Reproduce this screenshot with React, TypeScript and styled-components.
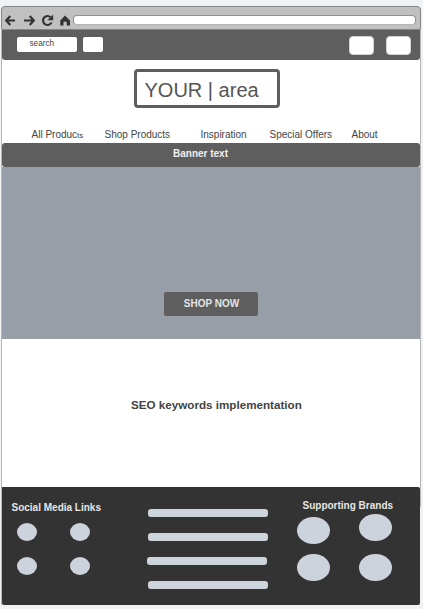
import React from "react";
import styled, { createGlobalStyle } from "styled-components";

const GlobalStyle = createGlobalStyle`
  * { box-sizing: border-box; }
  body {
    margin: 0;
    background: #f2f3f4;
    font-family: "Liberation Sans", Arial, sans-serif;
    color: #444;
    overflow: hidden;
  }
`;

const Page = styled.div`
  width: 423px;
  height: 609px;
  padding: 6px 2px 4px 1px;
  background: linear-gradient(#f0f3f5 0 30px, #f2f2f2 30px);
`;

const Window = styled.main`
  width: 420px;
  height: 599px;
  display: flex;
  flex-direction: column;
  border-radius: 5px 5px 0 0;
  background:
    linear-gradient(#b4b7b9, #b4b7b9) left / 1px 100% no-repeat,
    linear-gradient(#b4b7b9, #b4b7b9) right top / 1px 501px no-repeat,
    linear-gradient(#fff, #fff) left top / 100% 501px no-repeat;
`;

const BrowserBar = styled.header`
  height: 24px;
  flex: none;
  display: flex;
  align-items: flex-start;
  padding: 8px 4px 0 3px;
  background: #c0c0c0;
  border: 1px solid #858585;
  border-radius: 4px 4px 2px 2px;
`;

const BrowserIcons = styled.svg`
  width: 68px;
  height: 12px;
  flex: none;
  overflow: visible;
`;

const AddressBar = styled.div`
  width: 343px;
  height: 10px;
  background: #fff;
  border: 1px solid #929292;
  border-bottom-color: #b4b4b4;
  border-radius: 4px;
`;

const Toolbar = styled.div`
  height: 30px;
  flex: none;
  display: flex;
  align-items: flex-start;
  margin: 0 1px;
  padding: 7px 9px 0 15px;
  background: #5e5e5e;
  border-radius: 0 0 3px 3px;
`;

const SearchBox = styled.div`
  width: 60px;
  height: 15px;
  padding-left: 12.5px;
  font-size: 8.2px;
  line-height: 13px;
  background: #fff;
  border-radius: 2px;
`;

const SearchButton = styled.div`
  width: 20px;
  height: 15px;
  margin-left: 6px;
  background: #fff;
  border-radius: 2px;
`;

const Actions = styled.div`
  display: flex;
  gap: 12px;
  margin: -1px 0 0 auto;
`;

const Action = styled.div`
  width: 25px;
  height: 19px;
  background: #fff;
  border: 1px solid #d4d4d4;
  border-radius: 4px;
`;

const Logo = styled.div`
  width: 146px;
  height: 39px;
  flex: none;
  margin: 9px 0 0 133px;
  padding-left: 7.5px;
  font-size: 20px;
  line-height: 37px;
  color: #555;
  border: 3px solid #5e5e5e;
  border-radius: 4px;
  white-space: pre;
`;

const Nav = styled.nav`
  height: 35px;
  flex: none;
  display: flex;
  padding: 21px 0 0 30.5px;
`;

const NavItem = styled.span<{ $width: number }>`
  width: ${(p) => p.$width}px;
  font-size: 10px;
  line-height: 12px;
  white-space: nowrap;
`;

const SmallLetters = styled.span`
  font-size: 8px;
`;

const Banner = styled.div`
  height: 24px;
  flex: none;
  margin: 0 1px;
  padding-left: 171px;
  font-size: 10px;
  font-weight: bold;
  line-height: 22px;
  color: #f0f0f0;
  background: #5e5e5e;
  border-radius: 3px;
`;

const Hero = styled.section`
  height: 172px;
  flex: none;
  margin: 0 1px;
  padding: 125px 0 0 162px;
  background: #989ea8;
`;

const ShopButton = styled.div`
  width: 94px;
  height: 24px;
  padding-left: 1px;
  font-size: 10px;
  font-weight: bold;
  line-height: 23px;
  text-align: center;
  color: #e4e4e4;
  background: #5e5e5e;
  border-radius: 2px;
`;

const Seo = styled.section`
  height: 148px;
  flex: none;
  padding: 59px 0 0 130px;
  font-size: 11.65px;
  font-weight: bold;
  line-height: 14px;
`;

const Footer = styled.footer`
  height: 118px;
  flex: none;
  display: flex;
  margin: 0 1px;
  background: #333;
  border-radius: 0 2px 2px 2px;
`;

const SocialColumn = styled.div`
  width: 146px;
  flex: none;
  padding: 15px 0 0 9.5px;
`;

const LinkColumn = styled.div`
  width: 149px;
  flex: none;
  padding-top: 22px;
`;

const BrandColumn = styled.div`
  padding-top: 13px;
`;

const FooterTitle = styled.h2<{ $indent?: number }>`
  margin: 0 0 0 ${(p) => p.$indent ?? 0}px;
  font-size: 10px;
  font-weight: bold;
  line-height: 12px;
  color: #e6e6e6;
  white-space: nowrap;
`;

const SocialGrid = styled.div`
  display: grid;
  grid-template-columns: 20px 20px;
  gap: 15.5px 32.5px;
  margin: 9px 0 0 5.5px;
`;

const SocialDot = styled.div`
  height: 18px;
  border-radius: 50%;
  background: #cdd3dc;
`;

const LinkBar = styled.div<{ $shift?: number }>`
  width: 120px;
  height: 8px;
  margin: 0 0 16px ${(p) => p.$shift ?? 0}px;
  border-radius: 3px;
  background: #cdd4dc;
`;

const BrandGrid = styled.div`
  display: flex;
  gap: 29px;
  margin-top: 1.5px;
`;

const BrandStack = styled.div<{ $top: number; $gap: number }>`
  display: flex;
  flex-direction: column;
  gap: ${(p) => p.$gap}px;
  padding-top: ${(p) => p.$top}px;
`;

const BrandDot = styled.div`
  width: 33px;
  height: 27.5px;
  border-radius: 50%;
  background: #cdd3dc;
`;

export default function App() {
  return (
    <Page>
      <GlobalStyle />
      <Window>
        <BrowserBar>
          <BrowserIcons viewBox="0 0 68 12" fill="none" stroke="#333" strokeWidth="2.2">
            <path d="M5.3 1 1.2 5.5 5.3 10M1.5 5.5H10" />
            <path d="M24.7 1 28.8 5.5 24.7 10M28.5 5.5H19" />
            <path d="M45.6 2.2A4.5 4.5 0 1 0 46.6 7.4" strokeWidth="2.2" />
            <path d="M48.2-.6v5.8h-5.8z" fill="#333" stroke="none" />
            <path d="M60 0.6 65 5.6V10.5H61.7V6.8H58.5V10.5H55.3V5.6z" fill="#333" stroke="none" />
          </BrowserIcons>
          <AddressBar />
        </BrowserBar>
        <Toolbar>
          <SearchBox>search</SearchBox>
          <SearchButton />
          <Actions>
            <Action />
            <Action />
          </Actions>
        </Toolbar>
        <Logo>YOUR | area</Logo>
        <Nav>
          <NavItem $width={73}>
            All Produc<SmallLetters>ts</SmallLetters>
          </NavItem>
          <NavItem $width={96}>Shop Products</NavItem>
          <NavItem $width={69}>Inspiration</NavItem>
          <NavItem $width={82}>Special Offers</NavItem>
          <NavItem $width={40}>About</NavItem>
        </Nav>
        <Banner>Banner text</Banner>
        <Hero>
          <ShopButton>SHOP NOW</ShopButton>
        </Hero>
        <Seo>SEO keywords implementation</Seo>
        <Footer>
          <SocialColumn>
            <FooterTitle>Social Media Links</FooterTitle>
            <SocialGrid>
              <SocialDot />
              <SocialDot />
              <SocialDot />
              <SocialDot />
            </SocialGrid>
          </SocialColumn>
          <LinkColumn>
            <LinkBar />
            <LinkBar />
            <LinkBar $shift={-1} />
            <LinkBar />
          </LinkColumn>
          <BrandColumn>
            <FooterTitle $indent={5.5}>Supporting Brands</FooterTitle>
            <BrandGrid>
              <BrandStack $top={3} $gap={9.5}>
                <BrandDot />
                <BrandDot />
              </BrandStack>
              <BrandStack $top={0} $gap={12.5}>
                <BrandDot />
                <BrandDot />
              </BrandStack>
            </BrandGrid>
          </BrandColumn>
        </Footer>
      </Window>
    </Page>
  );
}
